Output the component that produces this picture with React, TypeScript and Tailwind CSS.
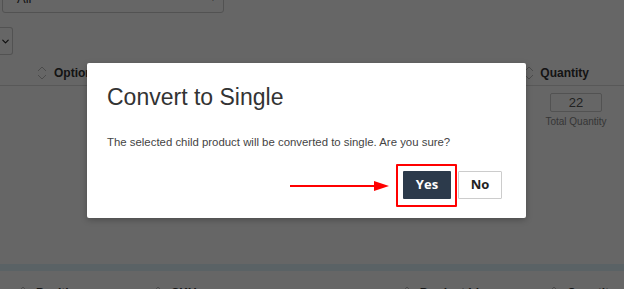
import { ChevronDown } from "lucide-react";

function SortIcon() {
  return (
    <svg width="10" height="16" viewBox="0 0 10 16" className="shrink-0">
      <path d="M1 6 L5 2 L9 6" fill="none" stroke="#bbb" strokeWidth="1" />
      <path d="M1 10 L5 14 L9 10" fill="none" stroke="#bbb" strokeWidth="1" />
    </svg>
  );
}

export default function App() {
  return (
    <div
      className="relative w-[624px] h-[289px] overflow-hidden bg-white text-[#333]"
      style={{ fontFamily: '"Liberation Sans", Arial, sans-serif' }}
    >
      {/* Page behind the dialog */}
      <div className="flex flex-col">
        <div className="h-[13px] flex">
          <div className="ml-[2px] w-[222px] h-[30px] -mt-[17px] border border-[#ccc] rounded-[3px] pl-[14px] pr-[6px] flex items-end justify-between pb-[7px]">
            <span className="text-[13px] leading-none">All</span>
            <span className="text-[8px] leading-none mb-[2px]">▼</span>
          </div>
        </div>
        <div className="mt-[14px] h-[28px] w-[13px] border border-l-0 border-[#ccc] rounded-r-[3px] flex items-center justify-end pr-[1px]">
          <ChevronDown size={11} strokeWidth={2.5} className="text-[#222]" />
        </div>
        <div className="mt-[5px] h-[26px] flex items-center border-b border-[#ddd] text-[12px] font-bold">
          <div className="ml-[37px] flex items-center gap-[7px]">
            <SortIcon />
            <span>Option</span>
          </div>
          <div className="ml-auto mr-[35px] flex items-center gap-[6px]">
            <SortIcon />
            <span>Quantity</span>
          </div>
        </div>
        <div className="flex justify-end pr-[18px] pt-[7px]">
          <div className="flex flex-col items-center w-[60px]">
            <div className="w-[52px] h-[19px] border border-[#ccc] rounded-[2px] flex items-center justify-center text-[13px] text-[#555]">
              22
            </div>
            <span className="mt-[2px] text-[10px] text-[#888] whitespace-nowrap">Total Quantity</span>
          </div>
        </div>
        <div className="mt-[135px] h-[7px] bg-[#e2f5fd]" />
        <div className="mt-[13px] flex items-center text-[12px] font-bold">
          <div className="ml-[18px] flex items-center gap-[8px]">
            <SortIcon />
            <span>Position</span>
          </div>
          <div className="ml-[70px] flex items-center gap-[8px]">
            <SortIcon />
            <span>SKU</span>
          </div>
          <div className="ml-[205px] flex items-center gap-[8px]">
            <SortIcon />
            <span>Product Id</span>
          </div>
          <div className="ml-[70px] flex items-center gap-[8px]">
            <SortIcon />
            <span>Quantity</span>
          </div>
        </div>
      </div>

      {/* Overlay */}
      <div className="absolute inset-0 bg-black/60" />

      {/* Dialog */}
      <div className="absolute left-[87px] top-[63px] w-[439px] h-[155px] bg-white rounded-[2px] shadow-[0_2px_6px_rgba(0,0,0,0.25)] px-[20px] pt-[20px]">
        <h2 className="text-[23px] leading-[28px] text-[#333]">Convert to Single</h2>
        <p className="mt-[24px] text-[11.4px] leading-[14px] text-[#444]">
          The selected child product will be converted to single. Are you sure?
        </p>
        <div className="mt-[22px] flex items-center justify-end pr-[4px] gap-[7px]">
          <div className="relative">
            <button
              className="w-[48px] h-[28px] bg-[#2c3a4b] text-white text-[13px] font-bold rounded-[1px]"
              style={{ fontFamily: '"Open Sans", sans-serif' }}
            >
              Yes
            </button>
            <div className="absolute -left-[7px] -top-[7px] -right-[6px] -bottom-[8px] border-2 border-[#ff0000] rounded-[1px]" />
            <svg className="absolute -left-[113px] top-[7px]" width="100" height="16" viewBox="0 0 100 16">
              <line x1="0" y1="8" x2="86" y2="8" stroke="#ff0000" strokeWidth="2" />
              <path d="M84 3 L99 8 L84 13 Z" fill="#ff0000" />
            </svg>
          </div>
          <button
            className="w-[44px] h-[28px] bg-white border border-[#ccc] text-[#222] text-[13px] font-bold rounded-[1px]"
            style={{ fontFamily: '"Open Sans", sans-serif' }}
          >
            No
          </button>
        </div>
      </div>
    </div>
  );
}
